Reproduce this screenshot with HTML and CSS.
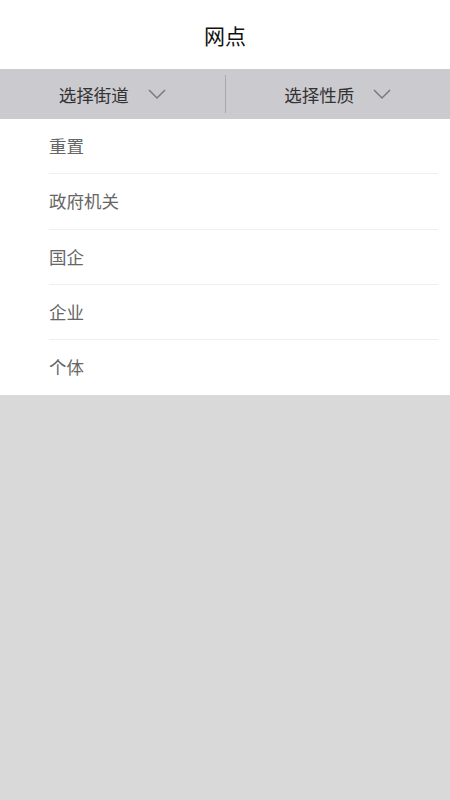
FILE: index.html
```html
<!DOCTYPE html>
<html lang="zh-CN">
<head>
  <meta charset="UTF-8">
  <meta name="viewport" content="width=device-width, initial-scale=1.0">
  <title>网点</title>
  <link rel="stylesheet" href="styles.css">
</head>
<body>
  <div class="header">网点</div>

  <div class="filters">
    <div class="filter">
      <span>选择街道</span>
      <svg class="arrow" width="18" height="11" viewBox="0 0 18 11"><path d="M1 1 L9 9 L17 1" fill="none" stroke="#7a7a7e" stroke-width="1.5"/></svg>
    </div>
    <div class="split"></div>
    <div class="filter">
      <span>选择性质</span>
      <svg class="arrow" width="18" height="11" viewBox="0 0 18 11"><path d="M1 1 L9 9 L17 1" fill="none" stroke="#7a7a7e" stroke-width="1.5"/></svg>
    </div>
  </div>

  <ul class="options">
    <li>重置</li>
    <li>政府机关</li>
    <li>国企</li>
    <li>企业</li>
    <li>个体</li>
  </ul>

  <div class="mask"></div>
</body>
</html>
```

FILE: styles.css
```css
html, body { margin: 0; padding: 0; height: 100%; }
body { font-family: "Noto Sans CJK SC", "Noto Sans", sans-serif; background: #d9d9d9; display: flex; flex-direction: column; }
.header { height: 69px; background: #fff; display: flex; align-items: center; justify-content: center; font-size: 21px; color: #111; }
.filters { height: 50px; background: #cbcacf; display: flex; align-items: center; }
.filter { flex: 1; display: flex; align-items: center; justify-content: center; gap: 19px; font-size: 17.5px; color: #333; }
.arrow { display: block; margin-top: 1px; }
.split { width: 1px; height: 38px; background: #a9a9ad; }
.options { list-style: none; margin: 0; padding: 0 12px 0 49px; background: #fff; }
.options li { box-sizing: border-box; height: 55.3px; line-height: 54px; font-size: 17.5px; color: #666; border-bottom: 1px solid #efefef; }
.options li:last-child { border-bottom: none; }
.mask { flex: 1; }
```
